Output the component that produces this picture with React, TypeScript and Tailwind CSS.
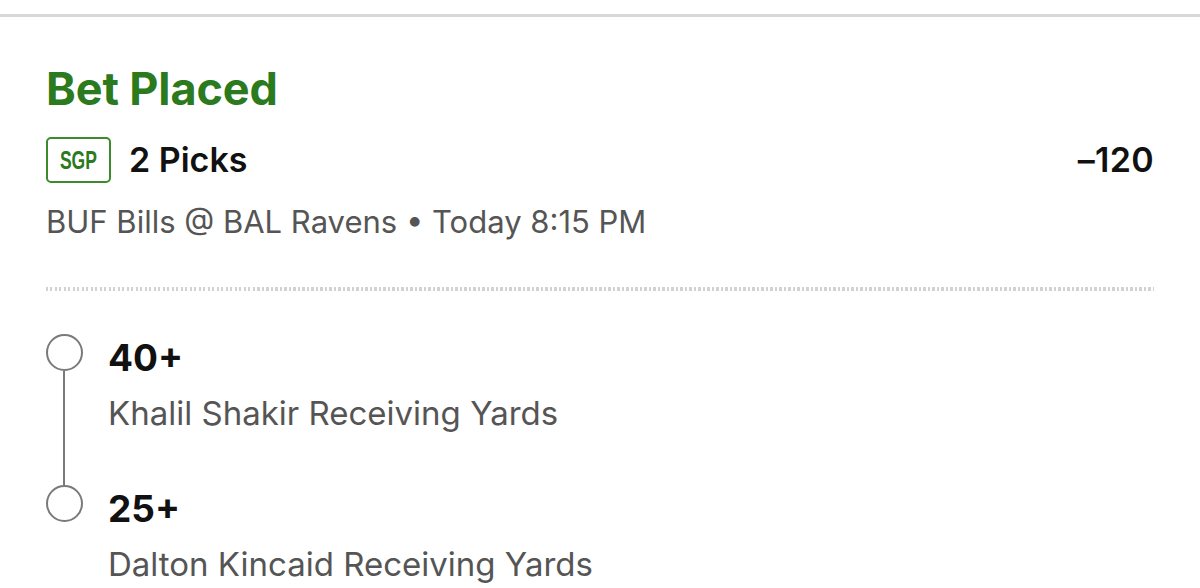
import React from "react"

const legs = [
  { line: "40+", label: "Khalil Shakir Receiving Yards" },
  { line: "25+", label: "Dalton Kincaid Receiving Yards" },
]

export default function App() {
  return (
    <div className="h-[588px] w-full overflow-hidden bg-white font-['Inter','Liberation_Sans',sans-serif]">
      {/* Top divider */}
      <div className="mt-[14px] h-[3px] bg-[#d8d8d8]" />

      <div className="px-[46px] pt-[44px]">
        {/* Header */}
        <h1 className="text-[45px] font-bold leading-[56px] tracking-[-0.1px] text-[#2b7a1e]">
          Bet Placed
        </h1>

        <div className="mt-[20px] flex h-[46px] items-center justify-between">
          <div className="flex items-center">
            <span className="flex h-[46px] w-[65px] items-center justify-center rounded-[5px] border-2 border-[#3b8a2c]">
              <span className="inline-block scale-x-[0.7] font-['Liberation_Sans',sans-serif] text-[25px] font-bold leading-none text-[#2b7a1e]">
                SGP
              </span>
            </span>
            <span className="ml-[18px] text-[34px] font-semibold leading-[46px] text-[#111]">
              2 Picks
            </span>
          </div>
          <span className="text-[34px] font-semibold leading-[46px] tracking-[0.3px] text-[#111]">–120</span>
        </div>

        <p className="mt-[21px] text-[31px] leading-[36px] text-[#555]">
          BUF Bills @ BAL Ravens • Today 8:15 PM
        </p>

        {/* Dotted separator */}
        <div className="mt-[47px] h-[4px] bg-[repeating-linear-gradient(90deg,#d2d2d2_0_2px,transparent_2px_4.5px)]" />

        {/* Legs */}
        <div className="mt-[43px] flex flex-col">
          {legs.map((leg, i) => (
            <div key={leg.line} className="flex">
              <div className="-ml-[1px] flex w-[38px] flex-col items-center">
                <div className="h-[37px] w-[37px] shrink-0 rounded-full border-2 border-[#7a7a7a]" />
                {i < legs.length - 1 && <div className="w-[2px] flex-1 bg-[#7a7a7a]" />}
              </div>
              <div className="ml-[25px] flex flex-col pb-[52px]">
                <span className="mt-[3px] text-[37px] font-bold leading-[42px] text-[#111]">
                  {leg.line}
                </span>
                <span className="mt-[14px] text-[33px] leading-[40px] text-[#555]">
                  {leg.label}
                </span>
              </div>
            </div>
          ))}
        </div>
      </div>
    </div>
  )
}
